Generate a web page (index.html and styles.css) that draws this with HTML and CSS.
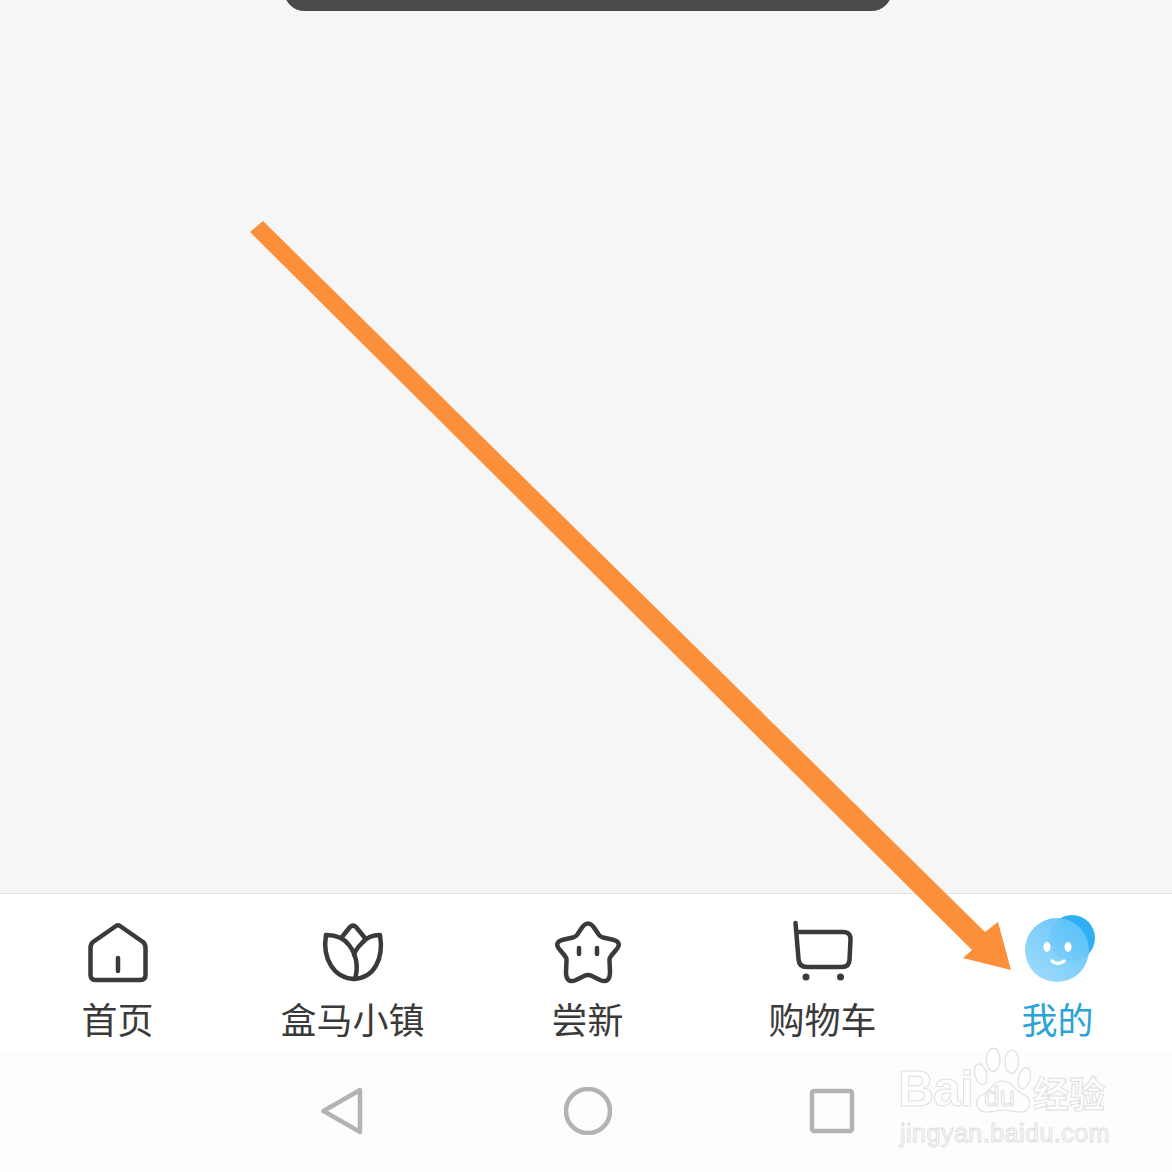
FILE: index.html
```html
<!doctype html>
<html>
    <head>
        <meta charset="utf-8" />
        <title>我的</title>
        <link rel="stylesheet" href="styles.css">
    </head>
    <body>
        <main class="content">
            <div class="toast"></div>
        </main>

        <!-- Bottom tabs -->
        <nav class="tab-bar">
            <div class="tab">
                <svg class="tab-icon" viewBox="0 0 70 70">
                    <path d="M33 11 L10 27 Q7.500 29 7.500 33 L7.500 60 Q7.500 65 12.500 65 L57.500 65 Q62.500 65 62.500 60 L62.500 33 Q62.500 29 60 27 L37 11 Q35 9.500 33 11 Z" />
                    <path d="M35 43 L35 56" />
                </svg>
                <span class="tab-label">首页</span>
            </div>
            <div class="tab">
                <svg class="tab-icon" viewBox="0 0 70 70">
                    <path d="M8 20 C4 44 16 63 36 64 C56 63 66 44 62 20 C54 20 48 23 44 28 C40 32 37 36 36 40" />
                    <path d="M8 20 C18 20 26 23 31 30 C37 38 41 50 37 64" />
                    <path d="M24 22 L32 12 Q35 9 38 12 L47 23" />
                </svg>
                <span class="tab-label">盒马小镇</span>
            </div>
            <div class="tab">
                <svg class="tab-icon" viewBox="0 0 70 70">
                    <path d="M28 14 Q35 3 42 14 L46 20 Q47.500 22 50 22.500 L59 24.500 Q70 27 63 35 L58 41 Q56 43.500 56.500 46 L57 57 Q57 69 47 65 L39 61 Q35 59 31 61 L23 65 Q13 69 13 57 L13.500 46 Q14 43.500 12 41 L7 35 Q0 27 11 24.500 L20 22.500 Q22.500 22 24 20 Z" />
                    <path d="M26 33 L26 39" />
                    <path d="M44 33 L44 39" />
                </svg>
                <span class="tab-label">尝新</span>
            </div>
            <div class="tab">
                <svg class="tab-icon" viewBox="0 0 70 70">
                    <path d="M7.500 8 L10.500 44 Q11 52 19 52 L54 52 Q61 52 61.500 45 L62.500 25 Q63 17 55 17 L9 17" />
                    <circle class="wheel" cx="18" cy="62" r="3.500" />
                    <circle class="wheel" cx="52.500" cy="62" r="3.500" />
                </svg>
                <span class="tab-label">购物车</span>
            </div>
            <div class="tab tab-active">
                <svg class="tab-icon avatar" viewBox="0 0 70 70">
                    <defs>
                        <linearGradient id="avatarFace" x1="0.900" y1="0.100" x2="0.200" y2="0.900">
                            <stop offset="0" stop-color="#5cc1f8" />
                            <stop offset="1" stop-color="#95d7fc" />
                        </linearGradient>
                    </defs>
                    <circle class="avatar-back" cx="49" cy="23" r="23" />
                    <circle class="avatar-front" cx="34" cy="35" r="32" fill="url(#avatarFace)" />
                    <ellipse class="avatar-eye" cx="24" cy="32" rx="3.500" ry="5" />
                    <ellipse class="avatar-eye" cx="45" cy="32" rx="3.500" ry="5" />
                    <path class="avatar-smile" d="M29 46 Q35 51 41 46" />
                </svg>
                <span class="tab-label">我的</span>
            </div>
        </nav>

        <!-- System navigation -->
        <div class="system-bar">
            <svg class="system-icon" viewBox="0 0 48 48">
                <path d="M3.500 24 L40 3 L40 45 Z" />
            </svg>
            <svg class="system-icon" viewBox="0 0 48 48">
                <circle cx="24" cy="24" r="22" />
            </svg>
            <svg class="system-icon" viewBox="0 0 48 48">
                <rect x="4" y="4" width="40" height="40" rx="2" />
            </svg>
        </div>

        <!-- Annotation arrow -->
        <svg class="arrow" viewBox="0 0 1172 1172">
            <polygon points="250,232 263,221 985,932 998,922 1011,970 963,958 972,950" />
        </svg>

        <!-- Watermark -->
        <div class="watermark">
            <div class="watermark-row">
                <span class="wm-bai">Bai</span>
                <div class="wm-paw">
                    <svg viewBox="0 0 62 72">
                        <ellipse cx="21" cy="14" rx="7" ry="12" />
                        <ellipse cx="40" cy="16" rx="7" ry="12" />
                        <ellipse cx="8" cy="29" rx="6" ry="11" transform="rotate(-15 8 29)" />
                        <ellipse cx="53" cy="33" rx="6" ry="11" transform="rotate(15 53 33)" />
                        <path d="M30 36 C20 36 20 46 10 50 C0 55 3 68 14 68 C22 68 24 66 31 66 C38 66 42 68 48 68 C60 68 62 55 52 50 C42 46 42 36 30 36 Z" />
                    </svg>
                    <span class="wm-du">du</span>
                </div>
                <span class="wm-jingyan">经验</span>
            </div>
            <div class="wm-url">jingyan.baidu.com</div>
        </div>
    </body>
</html>
```

FILE: styles.css
```css
* {
    box-sizing: border-box;
}

html,
body {
    margin: 0;
    padding: 0;
}

body {
    position: relative;
    width: 1172px;
    height: 1172px;
    overflow: hidden;
    background: #fdfdfd;
    font-family: "Noto Sans CJK SC", "Noto Sans", sans-serif;
}

.content {
    height: 893px;
    overflow: hidden;
    background: #f6f6f6;
}

.toast {
    width: 608px;
    height: 41px;
    margin: -30px 0 0 284px;
    background: #4a4a4a;
    border-radius: 24px;
}

.tab-bar {
    display: grid;
    grid-template-columns: repeat(5, 235px);
    height: 158px;
    padding-top: 21px;
    background: #fff;
    border-top: 1px solid #e2e2e2;
}

.tab {
    display: flex;
    flex-direction: column;
    align-items: center;
}

.tab-icon {
    width: 70px;
    height: 70px;
    fill: none;
    stroke: #3a3a3a;
    stroke-width: 4.500;
    stroke-linecap: round;
    stroke-linejoin: round;
    overflow: visible;
}

.tab-icon .wheel {
    fill: #3a3a3a;
    stroke: none;
}

.tab-label {
    margin-top: 11px;
    font-size: 36px;
    line-height: 44px;
    color: #3a3a3a;
}

.tab-active .tab-label {
    color: #2ba3d8;
}

.avatar-back {
    fill: #2fb0f5;
    stroke: none;
}

.avatar-front {
    fill-opacity: 0.95;
    stroke: none;
}

.avatar-eye {
    fill: #fff;
    stroke: none;
}

.avatar-smile {
    stroke: #fff;
    stroke-width: 3.500;
}

.system-bar {
    display: flex;
    justify-content: center;
    align-items: center;
    gap: 196px;
    height: 121px;
    padding-left: 4px;
    padding-bottom: 2px;
}

.system-icon {
    width: 48px;
    height: 48px;
    fill: none;
    stroke: #b3b3b3;
    stroke-width: 4.500;
    stroke-linejoin: round;
}

.arrow {
    position: absolute;
    top: 0;
    left: 0;
    width: 1172px;
    height: 1172px;
    fill: #fb8f3a;
}

.watermark {
    position: absolute;
    top: 1045px;
    left: 898px;
    width: 214px;
    font-family: "Liberation Sans", sans-serif;
    color: #fefefe;
    -webkit-text-stroke: 1px #dfdfdf;
}

.watermark-row {
    display: flex;
    align-items: flex-end;
    height: 72px;
}

.wm-bai {
    width: 75px;
    font-size: 50px;
    font-weight: bold;
    line-height: 56px;
    letter-spacing: -1px;
}

.wm-paw {
    position: relative;
    width: 60px;
    height: 72px;
}

.wm-paw svg {
    width: 60px;
    height: 72px;
    fill: #fefefe;
    stroke: #dfdfdf;
    stroke-width: 1.200;
}

.wm-du {
    position: absolute;
    left: 11px;
    top: 38px;
    font-size: 28px;
    line-height: 28px;
}

.wm-jingyan {
    font-family: "Noto Sans CJK SC", sans-serif;
    font-size: 36px;
    font-weight: bold;
    line-height: 50px;
}

.wm-url {
    margin-top: 2px;
    margin-left: 2px;
    font-size: 25px;
    line-height: 28px;
    letter-spacing: 0.500px;
    white-space: nowrap;
}
```
